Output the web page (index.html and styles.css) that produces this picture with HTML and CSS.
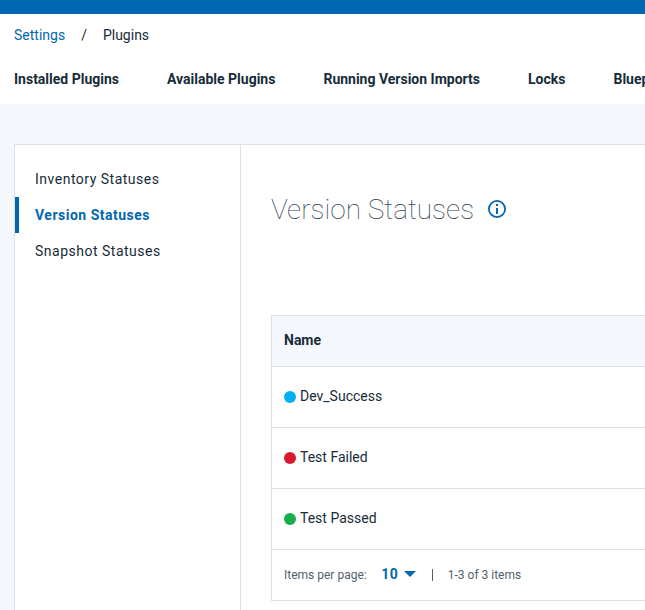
FILE: index.html
```html
<!DOCTYPE html>
<html lang="en">
<head>
<meta charset="utf-8">
<title>Version Statuses</title>
<link rel="stylesheet" href="styles.css">
</head>
<body>
<div class="topbar"></div>
<header class="header">
  <nav class="crumbs"><a href="#">Settings</a><span class="sep">/</span><span>Plugins</span></nav>
  <nav class="tabs"><span>Installed Plugins</span><span>Available Plugins</span><span>Running Version Imports</span><span>Locks</span><span>Blueprints</span></nav>
</header>
<main class="panel">
  <aside class="side">
    <div class="item">Inventory Statuses</div>
    <div class="item active">Version Statuses</div>
    <div class="item">Snapshot Statuses</div>
  </aside>
  <section class="content">
    <div class="title"><h1>Version Statuses</h1>
      <svg class="info" width="20" height="20" viewBox="0 0 20 20"><circle cx="10" cy="10" r="8.1" fill="none" stroke="#0067b1" stroke-width="1.8"/><path d="M9 5h2v2H9zM9 9h2v6H9z" fill="#0067b1"/></svg>
    </div>
    <div class="table">
      <div class="row head"><span>Name</span></div>
      <div class="row"><i class="dot blue"></i><span>Dev_Success</span></div>
      <div class="row"><i class="dot red"></i><span>Test Failed</span></div>
      <div class="row"><i class="dot green"></i><span>Test Passed</span></div>
      <div class="pager"><span class="label">Items per page:</span><b>10</b><svg class="caret" width="12" height="6" viewBox="0 0 12 6"><path d="M0 0h12L6 6z" fill="#0067b1"/></svg><i class="bar"></i><span class="range">1-3 of 3 items</span></div>
    </div>
  </section>
</main>
</body>
</html>
```
FILE: styles.css
```css
* { box-sizing: border-box; }
body { margin: 0; height: 610px; overflow: hidden; background: #f4f7fc; color: #162c38; font: 14px/20px Roboto, sans-serif; }
.topbar { height: 14px; background: #0067b1; }
.header { height: 90px; background: #fff; padding: 11px 14px 0; }
.crumbs { display: flex; }
.crumbs a { color: #0067b1; text-decoration: none; }
.sep { margin: 0 16px; }
.tabs { display: flex; gap: 48px; margin-top: 24px; font-weight: 700; white-space: nowrap; }
.panel { display: flex; height: 466px; margin: 40px 0 0 14px; background: #fff; border: 1px solid #dce1e5; border-width: 1px 0 0 1px; }
.side { width: 226px; flex: none; padding-top: 16px; border-right: 1px solid #dce1e5; }
.item { height: 36px; line-height: 36px; padding-left: 20px; letter-spacing: .5px; }
.active { border-left: 4px solid #0067b1; padding-left: 16px; color: #0067b1; font-weight: 700; }
.content { flex: 1; padding: 44px 0 0 30px; }
.title { display: flex; align-items: center; height: 40px; }
h1 { margin: 2px 0 0; font-size: 28px; line-height: 40px; font-weight: 100; color: #30444f; }
.info { margin-left: 13px; }
.table { margin-top: 86px; border: 1px solid #dedfe1; border-right: 0; }
.row { display: flex; align-items: center; height: 61px; padding-left: 12px; border-bottom: 1px solid #dedfe1; }
.row span { margin-bottom: 2px; }
.head { height: 51px; background: #f4f7fc; font-weight: 700; }
.dot { width: 12px; height: 12px; border-radius: 50%; margin-right: 4px; }
.blue { background: #00b0f0; }
.red { background: #d9182d; }
.green { background: #17af4b; }
.pager { display: flex; align-items: center; height: 50px; padding-left: 12px; font-size: 12px; }
.pager b { margin: 0 0 2px 14.5px; font-size: 14px; color: #0067b1; letter-spacing: .5px; }
.caret { margin: 0 0 2px 5.5px; }
.bar { width: 1px; height: 12px; margin: 0 15px 0 16px; background: #50626e; }
.label, .range { color: #50626e; }
```
